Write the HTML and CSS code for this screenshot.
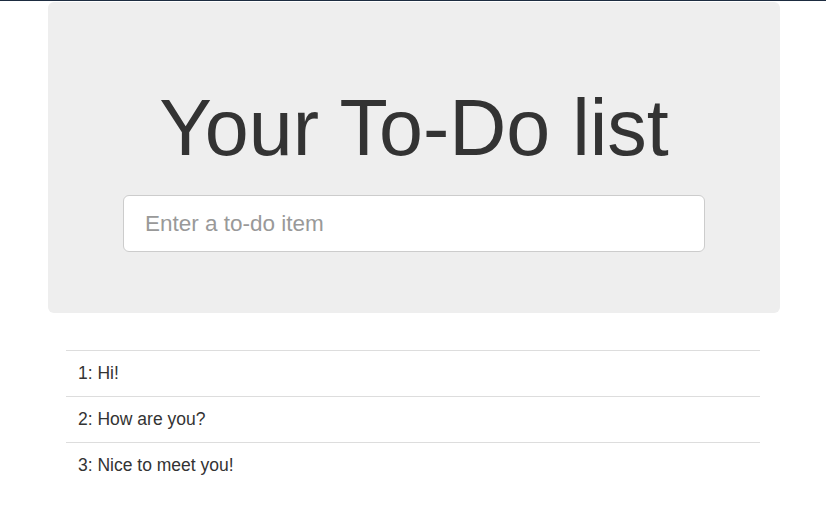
FILE: index.html
```html
<!DOCTYPE html>
<html lang="en">
<head>
<meta charset="utf-8">
<title>To-Do</title>
<link rel="stylesheet" href="styles.css">
</head>
<body>
<div class="topbar"></div>
<div class="page">
  <div class="jumbotron">
    <h1 class="title">Your To-Do list</h1>
    <input class="todo-input" type="text" placeholder="Enter a to-do item">
  </div>
  <ul class="todo-list">
    <li class="todo-item">1: Hi!</li>
    <li class="todo-item">2: How are you?</li>
    <li class="todo-item">3: Nice to meet you!</li>
  </ul>
</div>
</body>
</html>
```
FILE: styles.css
```css
* { box-sizing: border-box; }
html, body {
  margin: 0;
  padding: 0;
  background: #fff;
  font-family: "Liberation Sans", Arial, sans-serif;
  color: #333;
}
.topbar {
  height: 1px;
  background: #1d2c40;
}
.page {
  width: 732px;
  margin: 0 0 0 48px;
}
.jumbotron {
  margin-top: 1px;
  height: 311px;
  background: #eee;
  border-radius: 6px;
  display: flex;
  flex-direction: column;
  align-items: center;
  padding-top: 82px;
}
.title {
  margin: 0;
  font-size: 79px;
  line-height: 88px;
  font-weight: 400;
  color: #333;
}
.todo-input {
  margin-top: 23px;
  width: 582px;
  height: 57px;
  border: 1px solid #ccc;
  border-radius: 6px;
  background: #fff;
  padding: 0 21px;
  font-family: "Liberation Sans", Arial, sans-serif;
  font-size: 22.5px;
  color: #555;
  outline: none;
}
.todo-input::placeholder { color: #999; }
.todo-list {
  list-style: none;
  margin: 37px 20px 0 18px;
  padding: 0;
}
.todo-item {
  border-top: 1px solid #ddd;
  height: 46px;
  padding: 10px 12px 0;
  font-size: 17.5px;
  line-height: 24px;
}
```
